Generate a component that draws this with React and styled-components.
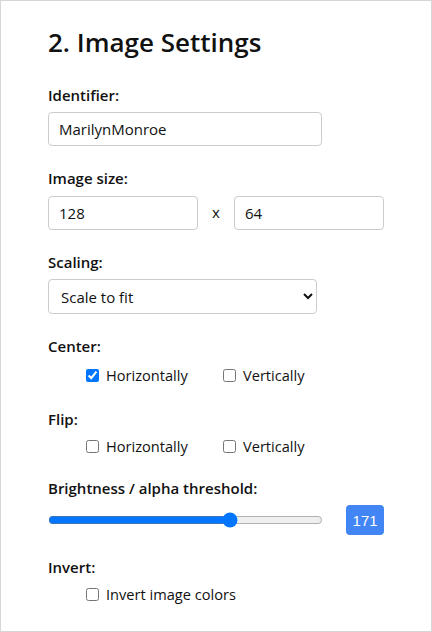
import React, { useState } from 'react'
import styled, { createGlobalStyle } from 'styled-components'

const GlobalStyle = createGlobalStyle`
	html, body {
		margin: 0;
		padding: 0;
		background: #ffffff;
	}
	body {
		font-family: 'Open Sans', 'Noto Sans', sans-serif;
		color: #111111;
	}
`

const Panel = styled.section`
	box-sizing: border-box;
	width: 432px;
	height: 632px;
	border: 1px solid #d6d6d6;
	padding: 25px 47px 0;
`

const Title = styled.h2`
	margin: 0 0 27px;
	font-size: 26px;
	line-height: 32px;
	font-weight: 600;
	color: #111111;
`

const Field = styled.div`
	margin-bottom: 22px;
`

const Label = styled.label`
	display: block;
	font-size: 15px;
	line-height: 20px;
	font-weight: 600;
	margin-bottom: 7px;
`

const TextInput = styled.input`
	box-sizing: border-box;
	width: ${(p) => p.$width || 274}px;
	height: 34px;
	border: 1px solid #cccccc;
	border-radius: 4px;
	padding: 0 10px;
	font-family: inherit;
	font-size: 15px;
	color: #111111;
	outline: none;
`

const SizeRow = styled.div`
	display: flex;
	align-items: center;
	padding-top: 1px;
`

const Times = styled.span`
	width: 38px;
	text-align: center;
	font-size: 15px;
	padding-bottom: 3px;
`

const Select = styled.select`
	box-sizing: border-box;
	width: 269px;
	height: 35px;
	border: 1px solid #cccccc;
	border-radius: 4px;
	padding: 0 8px;
	font-family: inherit;
	font-size: 15px;
	color: #111111;
	background: #ffffff;
	outline: none;
`

const CheckRow = styled.div`
	display: grid;
	grid-template-columns: repeat(${(p) => p.$cols || 2}, 137px);
	padding: ${(p) => (p.$spaced ? '2px 0 2px 38px' : '0 0 0 38px')};
	height: 20px;
	align-items: center;
`

const Check = styled.label`
	display: flex;
	align-items: center;
	gap: 7px;
	font-size: 14.6px;
	white-space: nowrap;
	input {
		width: 13px;
		height: 13px;
		margin: 0;
	}
`

const SliderRow = styled.div`
	display: flex;
	align-items: center;
	height: 30px;
`

const Range = styled.input`
	width: 276px;
	margin: 0;
`

const Badge = styled.span`
	margin-left: 23px;
	width: 38px;
	height: 30px;
	border-radius: 4px;
	background: #4285f4;
	color: #ffffff;
	font-family: 'Liberation Sans', Arial, sans-serif;
	font-size: 15px;
	display: flex;
	align-items: center;
	justify-content: center;
`

function CheckPair({ checks, spaced }) {
	return (
		<CheckRow $cols={checks.length} $spaced={spaced}>
			{checks.map((c) => (
				<Check key={c.label}>
					<input type='checkbox' defaultChecked={c.checked} />
					{c.label}
				</Check>
			))}
		</CheckRow>
	)
}

export default function App() {
	const [threshold, setThreshold] = useState(171)

	return (
		<>
			<GlobalStyle />
			<Panel>
				<Title>2. Image Settings</Title>

				<Field>
					<Label>Identifier:</Label>
					<TextInput defaultValue='MarilynMonroe' />
				</Field>

				<Field>
					<Label>Image size:</Label>
					<SizeRow>
						<TextInput $width={150} defaultValue='128' />
						<Times>x</Times>
						<TextInput $width={150} defaultValue='64' />
					</SizeRow>
				</Field>

				<Field>
					<Label>Scaling:</Label>
					<Select defaultValue='fit'>
						<option value='original'>Original size</option>
						<option value='fit'>Scale to fit</option>
						<option value='stretch'>Stretch to fill</option>
					</Select>
				</Field>

				<Field>
					<Label>Center:</Label>
					<CheckPair
						spaced
						checks={[
							{ label: 'Horizontally', checked: true },
							{ label: 'Vertically' },
						]}
					/>
				</Field>

				<Field>
					<Label>Flip:</Label>
					<CheckPair checks={[{ label: 'Horizontally' }, { label: 'Vertically' }]} />
				</Field>

				<Field>
					<Label>Brightness / alpha threshold:</Label>
					<SliderRow>
						<Range
							type='range'
							min='0'
							max='255'
							value={threshold}
							onChange={(e) => setThreshold(e.target.value)}
						/>
						<Badge>{threshold}</Badge>
					</SliderRow>
				</Field>

				<Field>
					<Label>Invert:</Label>
					<CheckPair checks={[{ label: 'Invert image colors' }]} />
				</Field>
			</Panel>
		</>
	)
}
